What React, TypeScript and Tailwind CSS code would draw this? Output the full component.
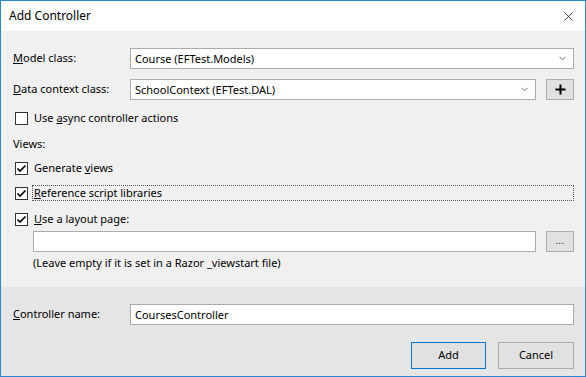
import { X } from "lucide-react";

const font = "font-['Noto_Sans','Open_Sans',sans-serif]";

function Chevron() {
  return (
    <svg width="7" height="5" viewBox="0 0 7 5" className="shrink-0">
      <path d="M0.5 0.8 L3.5 3.8 L6.5 0.8" fill="none" stroke="#707070" strokeWidth="1" />
    </svg>
  );
}

function Combo({ value, className = "" }: { value: string; className?: string }) {
  return (
    <div className={`h-[21px] bg-white border border-[#acacac] flex items-center pl-[4px] pr-[7px] ${className}`}>
      <span className="flex-1 leading-none">{value}</span>
      <Chevron />
    </div>
  );
}

function Check({ checked }: { checked?: boolean }) {
  return (
    <div className="w-[13px] h-[13px] bg-white border border-[#333333] flex items-center justify-center shrink-0">
      {checked && (
        <svg width="11" height="11" viewBox="0 0 11 11">
          <path d="M1.5 5.5 L4 8 L9.5 2.5" fill="none" stroke="#000" strokeWidth="1.7" />
        </svg>
      )}
    </div>
  );
}

function SmallButton({ children }: { children: React.ReactNode }) {
  return (
    <div className="w-[28px] h-[21px] bg-[#e1e1e1] border border-[#adadad] flex items-center justify-center shrink-0">
      {children}
    </div>
  );
}

export default function App() {
  return (
    <div className={`w-[586px] h-[377px] border border-[#2b87d6] flex flex-col text-[11px] text-black ${font}`}>
      {/* Title bar */}
      <div className="h-[30px] bg-white flex items-center justify-between pl-[8px] pr-[9px] shrink-0">
        <span className="text-[12px]">Add Controller</span>
        <X className="w-[15px] h-[15px]" strokeWidth={1.2} color="#111" />
      </div>

      {/* Main area */}
      <div className="h-[256px] bg-[#f0f0f0] pl-[12px] pr-[11px] pt-[17px] flex flex-col shrink-0">
        <div className="flex items-center h-[21px]">
          <span className="w-[117px] shrink-0"><u>M</u>odel class:</span>
          <Combo value="Course (EFTest.Models)" className="flex-1" />
        </div>

        <div className="flex items-center h-[21px] mt-[10px]">
          <span className="w-[117px] shrink-0"><u>D</u>ata context class:</span>
          <Combo value="SchoolContext (EFTest.DAL)" className="flex-1" />
          <div className="ml-[10px]">
            <SmallButton>
              <svg width="11" height="11" viewBox="0 0 11 11">
                <path d="M5.5 0.5 V10.5 M0.5 5.5 H10.5" stroke="#000" strokeWidth="2" />
              </svg>
            </SmallButton>
          </div>
        </div>

        <div className="flex items-center h-[16px] mt-[10px] pl-[2px] gap-[6px]">
          <Check />
          <span>Use <u>a</u>sync controller actions</span>
        </div>

        <div className="flex items-center h-[16px] mt-[10px]">
          <span>Views:</span>
        </div>

        <div className="flex items-center h-[16px] mt-[8px] pl-[2px] gap-[6px]">
          <Check checked />
          <span>Generate <u>v</u>iews</span>
        </div>

        <div className="flex items-center h-[16px] mt-[9px] pl-[2px] gap-[4px]">
          <Check checked />
          <span className="flex-1 h-[16px] border border-dotted border-[#555] flex items-center pl-[1px]">
            <span><u>R</u>eference script libraries</span>
          </span>
        </div>

        <div className="flex items-center h-[16px] mt-[10px] pl-[2px] gap-[6px]">
          <Check checked />
          <span><u>U</u>se a layout page:</span>
        </div>

        <div className="flex items-center mt-[4px] pl-[20px]">
          <div className="flex-1 h-[21px] bg-white border border-[#acacac]" />
          <div className="ml-[10px]">
            <SmallButton>
              <span className="text-[9px] leading-none tracking-[0.5px] pb-[2px]">...</span>
            </SmallButton>
          </div>
        </div>

        <div className="flex items-center h-[16px] mt-[3px] pl-[20px]">
          <span>(Leave empty if it is set in a Razor _viewstart file)</span>
        </div>
      </div>

      {/* Footer */}
      <div className="flex-1 bg-[#e5e5e5] pl-[12px] pr-[11px] pt-[17px] flex flex-col">
        <div className="flex items-center h-[21px]">
          <span className="w-[117px] shrink-0"><u>C</u>ontroller name:</span>
          <div className="flex-1 h-[21px] bg-white border border-[#acacac] flex items-center pl-[4px]">
            <span className="leading-none">CoursesController</span>
          </div>
        </div>

        <div className="flex justify-end gap-[12px] mt-[17px]">
          <div className="w-[75px] h-[27px] bg-[#e1e1e1] border border-[#0078d7] flex items-center justify-center">
            Add
          </div>
          <div className="w-[76px] h-[27px] bg-[#e1e1e1] border border-[#adadad] flex items-center justify-center">
            Cancel
          </div>
        </div>
      </div>
    </div>
  );
}
